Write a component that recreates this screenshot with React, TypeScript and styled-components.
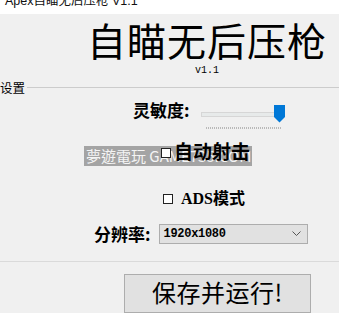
import React from "react";
import styled, { createGlobalStyle } from "styled-components";

const Global = createGlobalStyle`
  html, body { margin: 0; padding: 0; }
  body {
    background: #f0f0f0;
    width: 339px;
    height: 313px;
    overflow: hidden;
    font-family: "Liberation Serif", "Noto Sans CJK SC", serif;
    color: #000;
  }
`;

const Window = styled.div`
  position: relative;
  width: 339px;
  height: 313px;
  overflow: hidden;
  background: #f0f0f0;
  display: flex;
  flex-direction: column;
`;

const TitleBar = styled.div`
  height: 14px;
  background: #fff;
  overflow: hidden;
  flex: none;
`;

const TitleText = styled.div`
  margin-top: -7px;
  padding-left: 5px;
  font-family: "Liberation Sans", "Noto Sans CJK SC", sans-serif;
  font-size: 12.5px;
  line-height: 16px;
  color: #111;
`;

const Header = styled.div`
  margin-left: 86px;
  width: 242px;
  display: flex;
  flex-direction: column;
  align-items: center;
`;

const BigTitle = styled.div`
  margin-top: 4px;
  font-family: "Noto Sans CJK SC", sans-serif;
  font-weight: 400;
  font-size: 39px;
  line-height: 42px;
  letter-spacing: 1px;
`;

const Version = styled.div`
  margin-top: 5px;
  font-family: "Liberation Mono", monospace;
  font-size: 10px;
  line-height: 12px;
`;

const GroupHead = styled.div`
  margin-top: 3px;
  display: flex;
  align-items: flex-start;
  height: 16px;
`;

const GroupLabel = styled.span`
  font-family: "Noto Sans CJK SC", sans-serif;
  font-size: 12.5px;
  line-height: 16px;
  margin-right: 2px;
`;

const GroupLine = styled.div`
  flex: 1 1 auto;
  height: 1px;
  background: #cccccc;
  margin-top: 7px;
`;

const Row = styled.div<{ $left: number; $top: number; $h: number }>`
  position: relative;
  z-index: 1;
  margin-left: ${(p) => p.$left}px;
  margin-top: ${(p) => p.$top}px;
  height: ${(p) => p.$h}px;
  display: flex;
  align-items: center;
`;

const FieldLabel = styled.span<{ $size?: number }>`
  font-family: "Noto Sans CJK SC", sans-serif;
  font-weight: 700;
  font-size: ${(p) => p.$size ?? 17}px;
  line-height: 20px;
  white-space: nowrap;
  align-self: flex-start;
`;

const SliderWrap = styled.div`
  position: relative;
  margin-left: 11px;
  align-self: flex-start;
  margin-top: 3px;
  width: 86px;
  height: 30px;
`;

const Track = styled.div`
  position: absolute;
  left: 0;
  top: 9px;
  width: 82px;
  height: 3px;
  background: #e7eaea;
  border: 1px solid #d6d6d6;
`;

const Thumb = styled.svg`
  position: absolute;
  left: 73px;
  top: 2px;
`;

const Ticks = styled.div`
  position: absolute;
  left: 5px;
  top: 24px;
  width: 75px;
  height: 2px;
  background: repeating-linear-gradient(
    to right,
    #b9b9b9 0,
    #b9b9b9 1px,
    transparent 1px,
    transparent 2px
  );
`;

const Box = styled.span<{ $size: number; $gap: number }>`
  display: inline-block;
  width: ${(p) => p.$size}px;
  height: ${(p) => p.$size}px;
  border: 1px solid #222;
  background: #fff;
  box-sizing: border-box;
  margin-right: ${(p) => p.$gap}px;
`;

const CheckText = styled.span<{ $size: number }>`
  font-family: "Liberation Serif", "Noto Sans CJK SC", serif;
  font-weight: 700;
  font-size: ${(p) => p.$size}px;
  line-height: 20px;
  white-space: nowrap;
`;

const Select = styled.div`
  margin-left: 8px;
  width: 149px;
  height: 20px;
  background: #e1e1e1;
  border: 1px solid #adadad;
  display: flex;
  align-items: center;
  justify-content: space-between;
  padding: 0 6px 0 4px;
  box-sizing: border-box;
`;

const SelectValue = styled.span`
  font-family: "Liberation Mono", monospace;
  font-weight: 700;
  font-size: 12px;
  letter-spacing: -0.3px;
`;

const Separator = styled.div`
  margin-top: 17px;
  height: 1px;
  background: #dadada;
`;

const Button = styled.div`
  margin-left: 124px;
  margin-top: 12px;
  width: 187px;
  height: 40px;
  background: #e1e1e1;
  border: 1px solid #adadad;
  display: flex;
  justify-content: center;
  align-items: flex-start;
  padding-top: 1px;
  box-sizing: border-box;
  font-family: "Noto Sans CJK SC", sans-serif;
  font-size: 24px;
  line-height: 32px;
  letter-spacing: 0.5px;
`;

const Watermark = styled.div`
  position: absolute;
  z-index: 0;
  left: 84px;
  top: 146px;
  width: 168px;
  height: 20px;
  background: #a4a4a4;
  color: #f4f4f4;
  font-family: "Noto Sans CJK TC", sans-serif;
  font-size: 15px;
  line-height: 20px;
  padding-left: 2px;
  box-sizing: border-box;
  white-space: nowrap;
  overflow: hidden;
`;

export default function App() {
  return (
    <Window>
      <Global />
      <TitleBar>
        <TitleText>Apex自瞄无后压枪 V1.1</TitleText>
      </TitleBar>
      <Header>
        <BigTitle>自瞄无后压枪</BigTitle>
        <Version>v1.1</Version>
      </Header>
      <GroupHead>
        <GroupLabel>设置</GroupLabel>
        <GroupLine />
      </GroupHead>
      <Row $left={133} $top={4} $h={30}>
        <FieldLabel>灵敏度:</FieldLabel>
        <SliderWrap>
          <Track />
          <Thumb width="12" height="18" viewBox="0 0 12 18">
            <path d="M0 0 H11 V12 L5.5 17.5 L0 12 Z" fill="#0078d7" />
          </Thumb>
          <Ticks />
        </SliderWrap>
      </Row>
      <Row $left={161} $top={13} $h={20}>
        <Box $size={10} $gap={3} />
        <CheckText $size={19}>自动射击</CheckText>
      </Row>
      <Row $left={163} $top={26} $h={20}>
        <Box $size={10} $gap={8} />
        <CheckText $size={16}>ADS模式</CheckText>
      </Row>
      <Row $left={94} $top={15} $h={20}>
        <FieldLabel>分辨率:</FieldLabel>
        <Select>
          <SelectValue>1920x1080</SelectValue>
          <svg width="9" height="6" viewBox="0 0 9 6">
            <path d="M0.5 0.5 L4.5 4.5 L8.5 0.5" fill="none" stroke="#555" strokeWidth="1" />
          </svg>
        </Select>
      </Row>
      <Separator />
      <Button>保存并运行!</Button>
      <Watermark>夢遊電玩 GAME735.COM</Watermark>
    </Window>
  );
}
